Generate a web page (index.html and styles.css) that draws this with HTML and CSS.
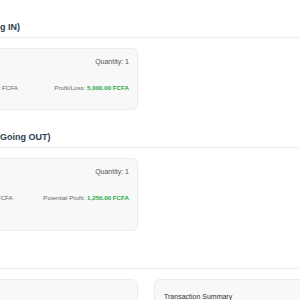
FILE: index.html
```html
<!DOCTYPE html>
<html lang="en">
<head>
    <meta charset="UTF-8">
    <meta name="viewport" content="width=device-width, initial-scale=1.0">
    <title>Stock Movements</title>
    <link rel="stylesheet" href="styles.css">
</head>
<body>
    <div class="page">
        <div class="section">
            <h2 class="section-title">Stock In (Going IN)</h2>
            <div class="grid">
                <div class="card">
                    <div class="row">
                        <span class="name">Rice</span>
                        <span class="qty">Quantity: 1</span>
                    </div>
                    <div class="row">
                        <span class="muted">Amount: 10,000.00 FCFA</span>
                        <span class="muted">Profit/Loss: <b class="gain">5,000.00 FCFA</b></span>
                    </div>
                </div>
            </div>
        </div>

        <div class="section">
            <h2 class="section-title">Sales Orders (Going OUT)</h2>
            <div class="grid">
                <div class="card">
                    <div class="row">
                        <span class="name">Oil</span>
                        <span class="qty">Quantity: 1</span>
                    </div>
                    <div class="row">
                        <span class="muted">Amount: 5000.00 FCFA</span>
                        <span class="muted">Potential Profit: <b class="gain">1,250.00 FCFA</b></span>
                    </div>
                    <div class="note">Sold</div>
                </div>
            </div>
        </div>

        <div class="section">
            <h2 class="section-title">Summary</h2>
            <div class="grid">
                <div class="card panel">
                    <h3 class="panel-title">Notes</h3>
                </div>
                <div class="card panel">
                    <h3 class="panel-title">Transaction Summary</h3>
                </div>
            </div>
        </div>
    </div>
</body>
</html>
```

FILE: styles.css
```css
body {
    margin: 0;
    font-family: "Liberation Sans", Arial, sans-serif;
    background-color: #fff;
    overflow: hidden;
}
.page {
    width: 414px;
    margin-left: -61px;
    padding-top: 20px;
}
.section {
    margin-bottom: 20px;
}
.section-title {
    font-size: 9px;
    line-height: 14px;
    font-weight: bold;
    color: #2c3e50;
    margin: 0 0 10px;
    padding-bottom: 3px;
    border-bottom: 1px solid #eeeeee;
}
.grid {
    display: grid;
    grid-template-columns: 1fr 1fr;
    gap: 16px;
}
.card {
    background-color: #f8f8f9;
    border: 1px solid #ebecee;
    border-radius: 6px;
    padding: 7px 8px 15px;
}
.row {
    display: flex;
    justify-content: space-between;
    align-items: center;
    line-height: 12px;
}
.row + .row {
    margin-top: 14px;
}
.name {
    font-size: 7px;
    font-weight: bold;
    color: #333;
}
.qty {
    font-size: 7px;
    color: #555;
}
.muted {
    font-size: 6.2px;
    color: #666;
}
.gain {
    color: #28a745;
}
.note {
    font-size: 6px;
    line-height: 9px;
    margin-top: 2px;
    color: #888;
}
.panel {
    padding: 11px 9px;
    min-height: 40px;
}
.panel-title {
    margin: 0;
    font-size: 7px;
    line-height: 12px;
    font-weight: normal;
    color: #333;
}
```
